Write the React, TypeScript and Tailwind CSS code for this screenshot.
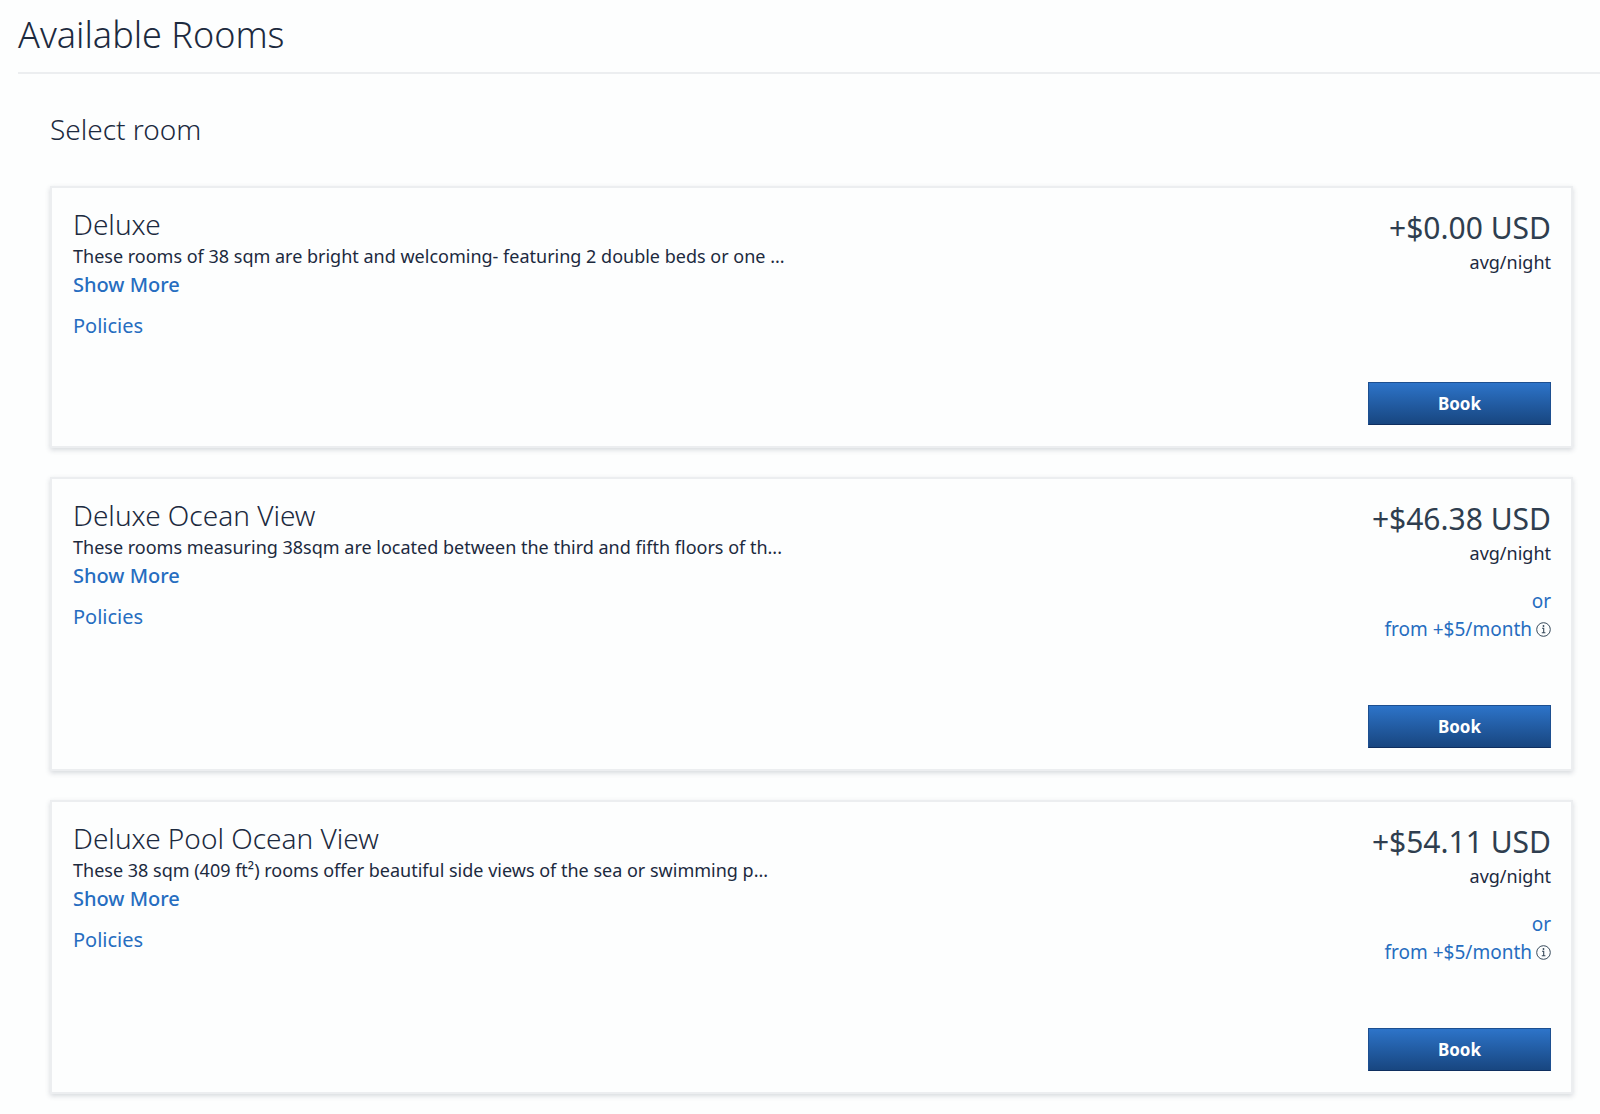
interface Room {
    name: string
    description: string
    price: string
    monthly?: string
}

const rooms: Room[] = [
    {
        name: 'Deluxe',
        description: 'These rooms of 38 sqm are bright and welcoming- featuring 2 double beds or one ...',
        price: '+$0.00 USD',
    },
    {
        name: 'Deluxe Ocean View',
        description: 'These rooms measuring 38sqm are located between the third and fifth floors of th...',
        price: '+$46.38 USD',
        monthly: 'from +$5/month',
    },
    {
        name: 'Deluxe Pool Ocean View',
        description: 'These 38 sqm (409 ft²) rooms offer beautiful side views of the sea or swimming p...',
        price: '+$54.11 USD',
        monthly: 'from +$5/month',
    },
]

function InfoIcon() {
    return (
        <svg width="15" height="15" viewBox="0 0 15 15" fill="none" stroke="#36495a" aria-hidden="true">
            <circle cx="7.5" cy="7.5" r="6.8" strokeWidth="1" />
            <path d="M6 6.3h1.7v4.4M5.8 10.8h3.6" strokeWidth="1.1" />
            <circle cx="7.5" cy="4" r="0.9" fill="#36495a" stroke="none" />
        </svg>
    )
}

function RoomCard({ room }: { room: Room }) {
    return (
        <article className="flex justify-between border-2 border-[#eceef0] bg-[#fdfefe] pt-5 pr-5 pb-[21px] pl-[21px] shadow-[0_2px_5px_rgba(60,70,90,0.2)]">
            <div className="flex flex-col items-start">
                <h3 className="mb-0.5 text-[28px] leading-8 font-light">{room.name}</h3>
                <p className="text-lg leading-7">{room.description}</p>
                <button type="button" className="mt-px text-xl leading-7 font-medium text-[#266dc0]">
                    Show More
                </button>
                <a href="#policies" className="mt-[13px] text-xl leading-7 text-[#266dc0]">
                    Policies
                </a>
            </div>

            <div className="flex flex-col items-end">
                <p className="text-[30px] leading-10 text-[#2f3e4f]">{room.price}</p>
                <p className="text-lg leading-7">avg/night</p>
                {room.monthly && (
                    <div className="mt-5 flex flex-col items-end text-[19px] leading-7 text-[#266dc0]">
                        <span>or</span>
                        <button type="button" className="flex items-center gap-1">
                            {room.monthly}
                            <InfoIcon />
                        </button>
                    </div>
                )}
                <button
                    type="button"
                    className={`h-[43px] w-[183px] border border-[#1d4f90] border-b-[#0f2f60] bg-linear-to-b from-[#2d74c9] to-[#184680] text-[17px] font-bold text-white ${
                        room.monthly ? 'mt-[62px]' : 'mt-[106px]'
                    }`}
                >
                    Book
                </button>
            </div>
        </article>
    )
}

function App() {
    return (
        <main className="bg-[#fdfefe] pt-[11px] pb-5 pl-[18px] font-['Noto_Sans','Open_Sans',sans-serif] text-[#1c2a3e]">
            <h1 className="border-b-2 border-[#eceef0] pb-[13px] text-4xl leading-12 font-light">Available Rooms</h1>
            <section className="pt-[35px] pr-[27px] pl-8">
                <h2 className="text-[28px] leading-10 font-light">Select room</h2>
                <div className="mt-[37px] flex flex-col gap-[29px]">
                    {rooms.map((room) => (
                        <RoomCard key={room.name} room={room} />
                    ))}
                </div>
            </section>
        </main>
    )
}

export default App
